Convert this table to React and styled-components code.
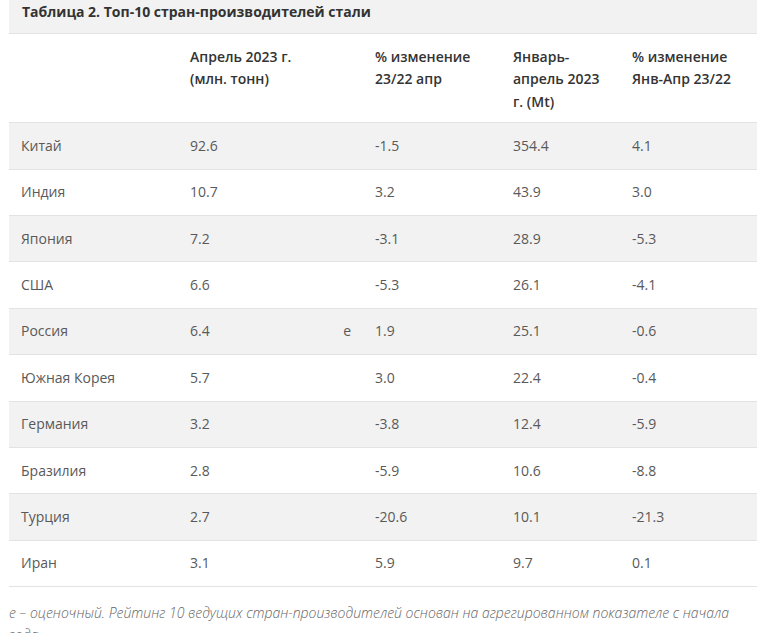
import styled, { createGlobalStyle } from 'styled-components';

const GlobalStyle = createGlobalStyle`
	body {
		margin: 0;
		background: #fff;
		font-family: 'Open Sans', 'Noto Sans', sans-serif;
	}
`;

const rows = [
	['Китай', '92.6', '', '-1.5', '354.4', '4.1'],
	['Индия', '10.7', '', '3.2', '43.9', '3.0'],
	['Япония', '7.2', '', '-3.1', '28.9', '-5.3'],
	['США', '6.6', '', '-5.3', '26.1', '-4.1'],
	['Россия', '6.4', 'e', '1.9', '25.1', '-0.6'],
	['Южная Корея', '5.7', '', '3.0', '22.4', '-0.4'],
	['Германия', '3.2', '', '-3.8', '12.4', '-5.9'],
	['Бразилия', '2.8', '', '-5.9', '10.6', '-8.8'],
	['Турция', '2.7', '', '-20.6', '10.1', '-21.3'],
	['Иран', '3.1', '', '5.9', '9.7', '0.1'],
];

const App = () => {
	return (
		<>
			<GlobalStyle />
			<Wrapper>
				<Table>
					<colgroup>
						<col style={{ width: 169 }} />
						<col style={{ width: 185 }} />
						<col style={{ width: 138 }} />
						<col style={{ width: 119 }} />
						<col style={{ width: 137 }} />
					</colgroup>
					<thead>
						<tr>
							<Caption colSpan={5}>Таблица 2. Топ-10 стран-производителей стали</Caption>
						</tr>
						<tr>
							<HeadCell></HeadCell>
							<HeadCell>
								Апрель 2023 г.
								<br />
								(млн. тонн)
							</HeadCell>
							<HeadCell>
								% изменение
								<br />
								23/22 апр
							</HeadCell>
							<HeadCell>Январь-апрель 2023 г. (Mt)</HeadCell>
							<HeadCell>
								% изменение
								<br />
								Янв-Апр 23/22
							</HeadCell>
						</tr>
					</thead>
					<tbody>
						{rows.map(([country, apr, mark, chg, ytd, ytdChg], i) => (
							<Row key={country} $striped={i % 2 === 0}>
								<Cell>{country}</Cell>
								<Cell>
									{apr}
									{mark && <Mark>{mark}</Mark>}
								</Cell>
								<Cell>{chg}</Cell>
								<Cell>{ytd}</Cell>
								<Cell>{ytdChg}</Cell>
							</Row>
						))}
					</tbody>
				</Table>
				<Note>
					e – оценочный. Рейтинг 10 ведущих стран-производителей основан на агрегированном
					показателе с начала года.
				</Note>
			</Wrapper>
		</>
	);
};

const Wrapper = styled.div`
	padding-left: 9px;
	width: 748px;
`;

const Table = styled.table`
	width: 748px;
	border-collapse: collapse;
	table-layout: fixed;
	font-size: 14px;
	line-height: 22.4px;
`;

const Caption = styled.th`
	background-color: #f2f2f2;
	color: #333;
	font-weight: 700;
	text-align: left;
	padding: 1px 13px 10px;
	line-height: 22px;
	border-bottom: 1px solid #e3e3e3;
`;

const HeadCell = styled.th`
	text-align: left;
	vertical-align: top;
	font-weight: 600;
	color: #333;
	padding: 12px 12px 9px;
	border-bottom: 1px solid #e3e3e3;
`;

const Row = styled.tr`
	background-color: ${props => (props.$striped ? '#f2f2f2' : '#fff')};
`;

const Cell = styled.td`
	color: #595959;
	padding: 11.5px 12px 11.5px;
	border-bottom: 1px solid #e3e3e3;
	vertical-align: middle;
`;

const Mark = styled.span`
	float: right;
`;

const Note = styled.p`
	margin: 15px 0 0;
	color: #666;
	font-style: italic;
	font-weight: 300;
	font-size: 14px;
	line-height: 22px;
	padding-right: 20px;
`;

export default App;
